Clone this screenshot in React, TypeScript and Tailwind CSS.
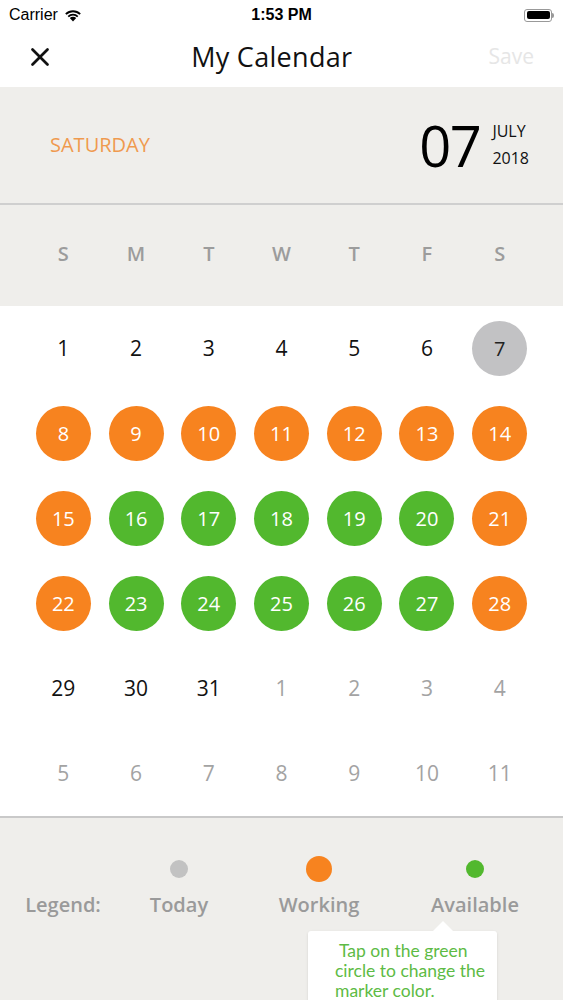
import { X } from "lucide-react";

type Mark = "none" | "today" | "working" | "available" | "faded";

const ORANGE = "bg-[#f7831f]";
const GREEN = "bg-[#52b82e]";

// 6 weeks, July 2018 starts on a Sunday
const weeks: { n: number; m: Mark }[][] = [
  [1, 2, 3, 4, 5, 6].map((n) => ({ n, m: "none" as Mark })).concat([{ n: 7, m: "today" }]),
  [8, 9, 10, 11, 12, 13, 14].map((n) => ({ n, m: "working" as Mark })),
  [15, 16, 17, 18, 19, 20, 21].map((n) => ({ n, m: (n === 15 || n === 21 ? "working" : "available") as Mark })),
  [22, 23, 24, 25, 26, 27, 28].map((n) => ({ n, m: (n === 22 || n === 28 ? "working" : "available") as Mark })),
  [
    { n: 29, m: "none" },
    { n: 30, m: "none" },
    { n: 31, m: "none" },
    { n: 1, m: "faded" },
    { n: 2, m: "faded" },
    { n: 3, m: "faded" },
    { n: 4, m: "faded" },
  ],
  [5, 6, 7, 8, 9, 10, 11].map((n) => ({ n, m: "faded" as Mark })),
];

function DayCell({ n, m }: { n: number; m: Mark }) {
  if (m === "none" || m === "faded") {
    return (
      <div className="flex h-[85px] items-center justify-center">
        <span className={`text-[21px] ${m === "faded" ? "text-[#a3a3a3]" : "text-[#111]"}`}>{n}</span>
      </div>
    );
  }
  const bg = m === "today" ? "bg-[#c2c2c4]" : m === "working" ? ORANGE : GREEN;
  const fg = m === "today" ? "text-[#222]" : "text-white";
  return (
    <div className="flex h-[85px] items-center justify-center">
      <span className={`flex h-[55px] w-[55px] items-center justify-center rounded-full text-[20px] ${bg} ${fg}`}>
        {n}
      </span>
    </div>
  );
}

export default function App() {
  return (
    <div
      className="relative h-[1000px] w-[563px] overflow-hidden bg-[#efeeeb]"
      style={{ fontFamily: '"Open Sans", "Noto Sans", sans-serif' }}
    >
      {/* status bar */}
      <div
        className="flex h-[30px] items-center justify-between bg-white px-[9px] text-[16px] text-black"
        style={{ fontFamily: '"Liberation Sans", Arial, sans-serif' }}
      >
        <div className="flex w-[120px] items-center gap-[6px]">
          <span>Carrier</span>
          <svg width="18" height="13" viewBox="0 0 18 13">
            <path d="M9 12.5 L5.8 9.1 A4.6 4.6 0 0 1 12.2 9.1 Z" fill="#000" />
            <path d="M3.6 6.9 A7.8 7.8 0 0 1 14.4 6.9 L13.1 8.2 A6 6 0 0 0 4.9 8.2 Z" fill="#000" />
            <path d="M1.2 4.5 A11.2 11.2 0 0 1 16.8 4.5 L15.5 5.8 A9.4 9.4 0 0 0 2.5 5.8 Z" fill="#000" />
          </svg>
        </div>
        <span className="font-semibold">1:53 PM</span>
        <div className="flex w-[120px] justify-end">
          <div className="flex items-center">
            <div className="h-[13px] w-[28px] rounded-[3px] border border-[#999] p-[1.5px]">
              <div className="h-full w-full rounded-[2px] bg-black" />
            </div>
            <div className="h-[5px] w-[2px] rounded-r-sm bg-[#999]" />
          </div>
        </div>
      </div>

      {/* nav bar */}
      <div className="flex h-[57px] items-center justify-between bg-white pb-[3px] pl-[25px] pr-[29px]">
        <X size={30} strokeWidth={2.2} className="text-[#111]" />
        <span className="text-[27px] tracking-[0.3px] text-[#111]">My Calendar</span>
        <span className="text-[21px] text-[#e6e6e6]">Save</span>
      </div>

      {/* selected date */}
      <div className="flex h-[118px] items-center justify-between border-b-2 border-[#cfcfcf] pl-[50px] pr-[34px]">
        <span className="text-[20px] text-[#ef9a4f]">SATURDAY</span>
        <div className="flex items-center gap-[12px]">
          <span className="text-[56px] leading-none tracking-tight text-black">07</span>
          <div className="flex flex-col text-[16px] leading-[27px] text-[#111]">
            <span>JULY</span>
            <span>2018</span>
          </div>
        </div>
      </div>

      {/* weekdays */}
      <div className="grid h-[101px] grid-cols-7 items-center px-[27px] pb-[4px]">
        {["S", "M", "T", "W", "T", "F", "S"].map((d, i) => (
          <span key={i} className="text-center text-[20px] font-semibold text-[#9c9c9c]">
            {d}
          </span>
        ))}
      </div>

      {/* month grid */}
      <div className="grid grid-cols-7 border-b-2 border-[#c9c9c9] bg-white px-[27px]">
        {weeks.flat().map((d, i) => (
          <DayCell key={i} n={d.n} m={d.m} />
        ))}
      </div>

      {/* legend */}
      <div className="flex pt-[38px] text-[20px] font-semibold text-[#9a9a9a]">
        <div className="flex w-[126px] flex-col items-center">
          <div className="h-[26px]" />
          <span className="mt-[8px]">Legend:</span>
        </div>
        <div className="flex w-[106px] flex-col items-center">
          <div className="flex h-[26px] items-center">
            <span className="h-[18px] w-[18px] rounded-full bg-[#c2c2c2]" />
          </div>
          <span className="mt-[8px]">Today</span>
        </div>
        <div className="flex w-[174px] flex-col items-center">
          <div className="flex h-[26px] items-center">
            <span className="h-[26px] w-[26px] rounded-full bg-[#f7831f]" />
          </div>
          <span className="mt-[8px]">Working</span>
        </div>
        <div className="flex w-[138px] flex-col items-center">
          <div className="flex h-[26px] items-center">
            <span className="h-[18px] w-[18px] rounded-full bg-[#52b82e]" />
          </div>
          <span className="mt-[8px]">Available</span>
        </div>
      </div>

      {/* hint tooltip */}
      <div
        className="absolute left-[308px] top-[931px] h-[90px] w-[189px] rounded-[3px] bg-white pl-[27px] pr-[6px] pt-[10px] text-[17.5px] leading-[20px] text-[#5dbb45] shadow-sm"
        style={{ fontFamily: 'Lato, "Open Sans", sans-serif' }}
      >
        <div className="absolute -top-[10px] left-[125px] h-0 w-0 border-x-[10px] border-b-[10px] border-x-transparent border-b-white" />
        <p className="whitespace-nowrap">
          <span className="pl-[4px]">Tap on the green</span>
          <br />
          circle to change the
          <br />
          marker color.
        </p>
      </div>
    </div>
  );
}
